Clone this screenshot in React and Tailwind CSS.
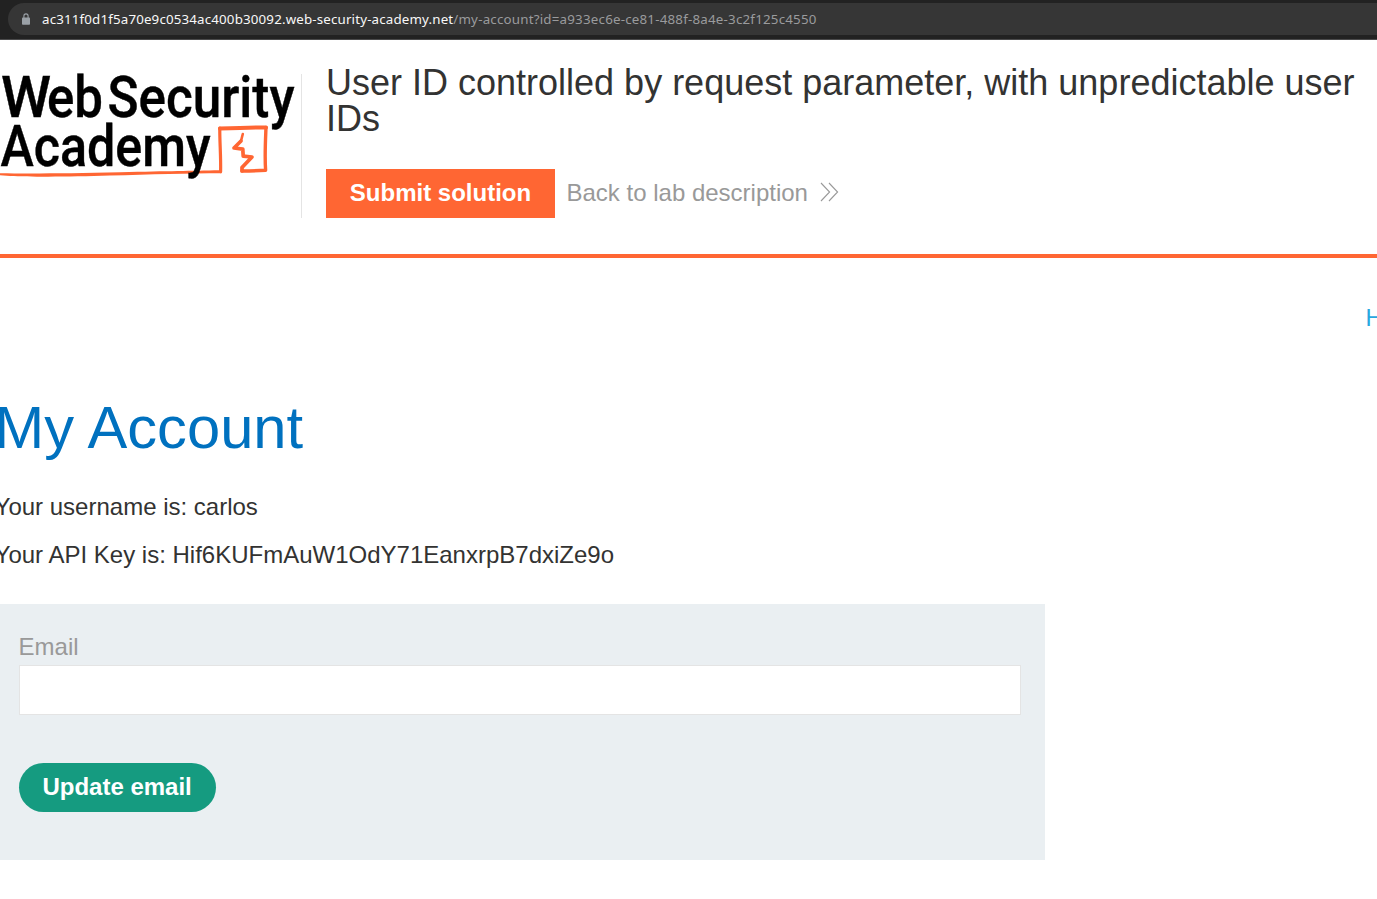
function AddressBar() {
  return (
    <div className="h-10 bg-[#222222] border-b border-[#4a4a4b] pt-[3px] pl-2">
      <div className="h-8 bg-[#363636] rounded-l-full flex items-center pl-[14px] whitespace-nowrap font-['Noto_Sans',sans-serif] text-[13.33px] leading-8">
        <svg width="8" height="12" viewBox="0 0 8 12" className="mr-3 shrink-0 -mt-px">
          <path d="M1.9 5V3a2.1 2.1 0 0 1 4.2 0v2" fill="none" stroke="#9aa0a6" strokeWidth="1.1" />
          <rect x="0" y="4.5" width="8" height="7.2" rx="0.8" fill="#9aa0a6" />
        </svg>
        <span className="text-[#f8f8f8] tracking-[0.16px]">ac311f0d1f5a70e9c0534ac400b30092.web-security-academy.net</span>
        <span className="text-[#9a9b9d] tracking-[0.21px]">/my-account?id=a933ec6e-ce81-488f-8a4e-3c2f125c4550</span>
      </div>
    </div>
  );
}

function Logo() {
  return (
    <svg width="301" height="110" viewBox="0 70 301 110" className="block shrink-0" role="img" aria-label="Web Security Academy">
      <path d="M0 173.2 C30 173.6 70 173.4 120 172.2 S190 170.8 220 170.2 L221.5 173.2 C190 173.4 150 174.2 110 175.6 S30 177 10 176 L0 175.2 Z" fill="#ff6633" />
      <g fill="none" stroke="#ff6633" strokeLinecap="round" strokeLinejoin="round">
        <path d="M220.6 171.6 C221 156 219.6 142 219.8 128" strokeWidth="3.2" />
        <path d="M220 128.6 C235 128 250 127.4 266 127.4" strokeWidth="4" />
        <path d="M266 127.4 C265.4 142 264.6 156 265.6 170.2 C258 170.8 250 171 242 171" strokeWidth="3.4" />
        <path d="M242 171 L242 167.6 L252 157 L243.2 156.2 L242.8 149.2 L234 148 L241 141" strokeWidth="3.7" />
        <path d="M241 141 L242.8 134" strokeWidth="2.6" />
      </g>
      <g className="font-['Roboto',sans-serif] font-medium" fontSize="56.5" fill="#000" stroke="#000" strokeWidth="0.4">
        <text x="1" y="117.4" textLength="50" lengthAdjust="spacingAndGlyphs">W</text>
        <text x="47" y="117.4" textLength="56" lengthAdjust="spacingAndGlyphs">eb</text>
        <text x="107.5" y="117.4" textLength="187" lengthAdjust="spacingAndGlyphs">Security</text>
        <text x="0.5" y="166" textLength="210" lengthAdjust="spacingAndGlyphs">Academy</text>
      </g>
    </svg>
  );
}

function LabHeader() {
  return (
    <header className="h-[218px] border-b-4 border-[#ff6633] flex">
      <div className="mt-[34px] h-36 w-[302px] shrink-0 border-r border-[#e4e4e4]">
        <div className="-mt-1">
          <Logo />
        </div>
      </div>
      <div className="pl-6 pt-[25px] flex-1">
        <h2 className="text-4xl leading-9 text-[#333332]">
          User ID controlled by request parameter, with unpredictable user IDs
        </h2>
        <div className="flex items-center mt-8 h-[49px]">
          <button className="bg-[#ff6633] text-white font-bold text-2xl leading-6 h-[49px] w-[229px] pb-0.5">Submit solution</button>
          <a className="ml-[11.5px] pb-0.5 text-2xl leading-6 text-[#999999] flex items-center">
            Back to lab description
            <svg width="20" height="20" viewBox="0 0 20 20" className="ml-3 -mt-0.5" fill="none" stroke="#999999" strokeWidth="1.1">
              <path d="M1 1 L9.6 10 L1 19 M9 1 L17.6 10 L9 19" />
            </svg>
          </a>
        </div>
      </div>
    </header>
  );
}

export default function App() {
  return (
    <div className="h-[899px] overflow-hidden bg-white font-['Liberation_Sans',Arial,sans-serif] text-2xl leading-6 text-[#333332]">
      <AddressBar />
      <LabHeader />
      <nav className="mt-12 flex justify-end overflow-hidden">
        <a className="w-[11.5px] whitespace-nowrap text-[#29a7df]">Home</a>
      </nav>
      <main className="-ml-[5.4px] w-[1050.4px]">
        <h1 className="mt-[68px] text-[59.7px] leading-[59px] text-[#0071bf]">My Account</h1>
        <p className="mt-[38px]">Your username is: carlos</p>
        <p className="mt-6">Your API Key is: Hif6KUFmAuW1OdY71EanxrpB7dxiZe9o</p>
        <form className="mt-[37px] h-64 bg-[#eaeff2] px-6 pt-[31px]">
          <label className="block text-[#999999]" htmlFor="email">Email</label>
          <input id="email" type="email" className="mt-1.5 block h-[50px] w-full border border-[#e4e4e4] bg-white px-3 outline-none" />
          <button type="button" className="mt-12 h-[49px] w-[197px] rounded-full bg-[#159b80] pb-0.5 font-bold text-white">Update email</button>
        </form>
      </main>
    </div>
  );
}
